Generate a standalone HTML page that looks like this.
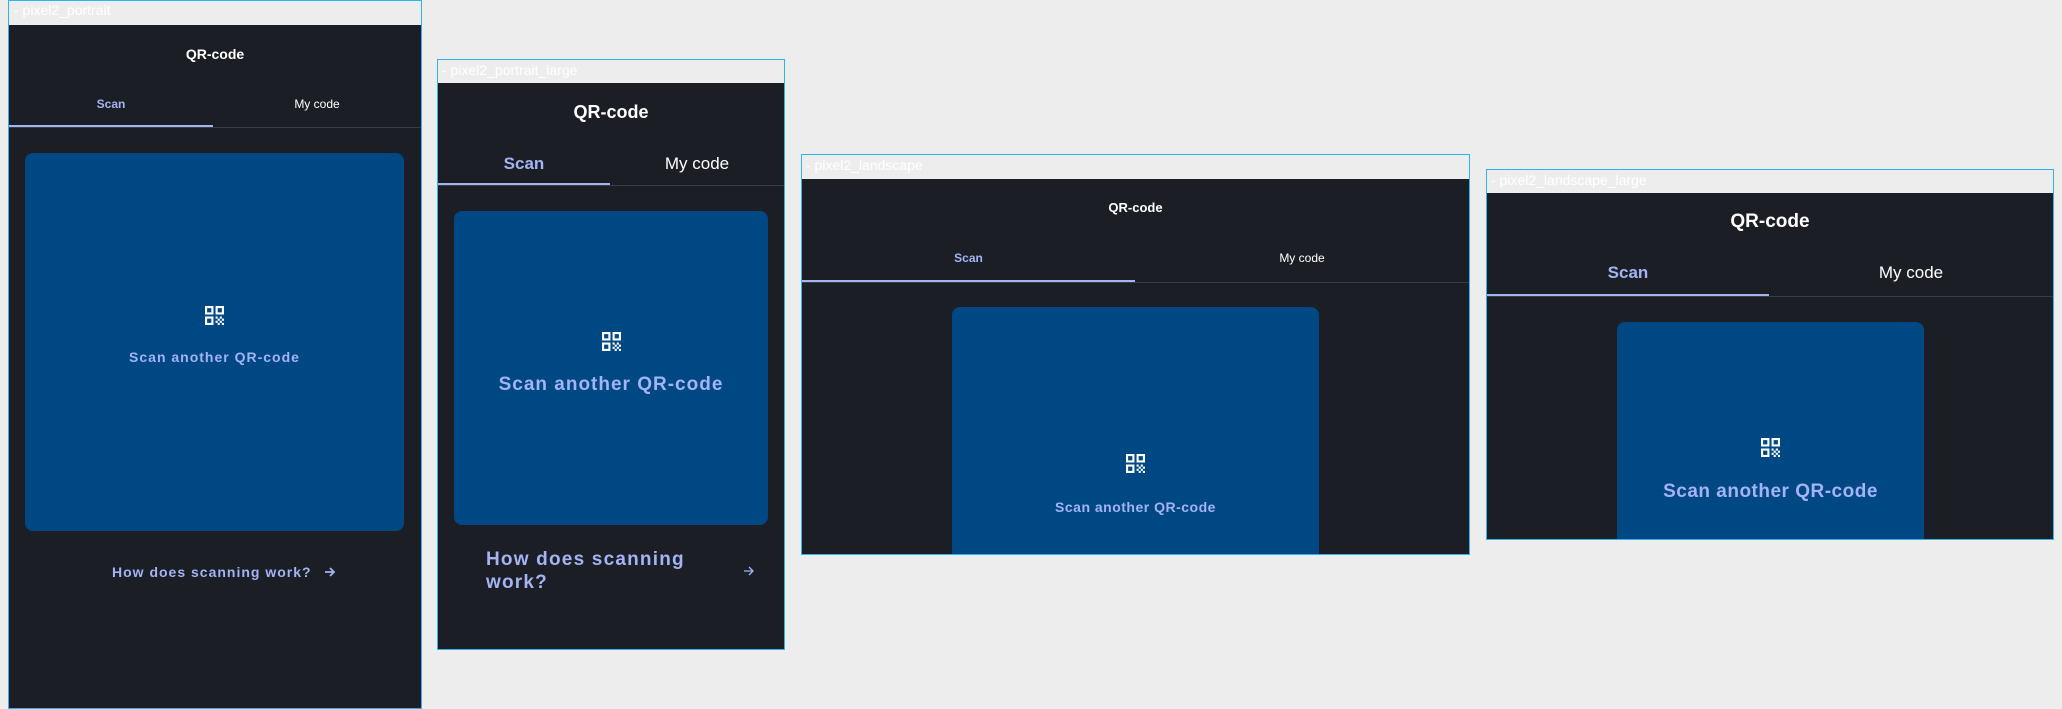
<!DOCTYPE html>
<html><head><meta charset="utf-8"><style>
*{margin:0;padding:0;box-sizing:border-box}
body{width:2062px;height:709px;background:#ededed;position:relative;overflow:hidden;font-family:"Liberation Sans","DejaVu Sans",sans-serif}
.a{position:absolute}
.fr{position:absolute;border:1px solid #2fb3ee}
.dk{position:absolute;background:#1c1e25}
.lbl{position:absolute;color:#fff;font-size:15px;white-space:nowrap}
.t{position:absolute;text-align:center;white-space:nowrap;font-weight:bold;color:#fff}
.acc{color:#a3b3f4}
.card{position:absolute;background:#004884;border-radius:8px}
.line{position:absolute;height:1px;background:#3a3c44}
.ind{position:absolute;height:3px;background:#a3b3f4}
svg{position:absolute}
</style></head><body>

<!-- Frame 1 -->
<div class="fr" style="left:8px;top:0;width:414px;height:709px"></div>
<div class="lbl" style="left:14px;top:2px;font-size:14px">- pixel2_portrait</div>
<div class="dk" style="left:9px;top:25px;width:412px;height:683px"></div>
<div class="t" style="left:9px;width:412px;top:45px;font-size:14px;line-height:18px">QR-code</div>
<div class="t acc" style="left:9px;width:204px;top:96px;font-size:12px;line-height:16px">Scan</div>
<div class="t" style="left:213px;width:208px;top:96px;font-size:12px;line-height:16px;font-weight:normal">My code</div>
<div class="line" style="left:9px;top:127px;width:412px"></div>
<div class="ind" style="left:9px;top:125px;width:204px;height:2px"></div>
<div class="card" style="left:25px;top:153px;width:379px;height:378px"></div>
<svg style="left:205px;top:306px" width="19" height="19" viewBox="3 3 18 18"><path fill="#fff" d="M3 11h8V3H3v8zm2-6h4v4H5V5zM3 21h8v-8H3v8zm2-6h4v4H5v-4zM13 3v8h8V3h-8zm6 6h-4V5h4v4zM19 19h2v2h-2zM13 13h2v2h-2zM15 15h2v2h-2zM13 17h2v2h-2zM15 19h2v2h-2zM17 17h2v2h-2zM17 13h2v2h-2zM19 15h2v2h-2z"/></svg>
<div class="t acc" style="left:25px;width:379px;top:348px;font-size:14px;line-height:18px;letter-spacing:1px">Scan another QR-code</div>
<div class="t acc" style="left:112px;top:563px;font-size:14px;line-height:18px;letter-spacing:1px;text-align:left">How does scanning work?</div>
<svg style="left:324px;top:566px" width="12" height="12" viewBox="0 0 12 12"><path d="M1 6h9M6 2l4 4-4 4" stroke="#a3b3f4" stroke-width="1.8" fill="none"/></svg>

<!-- Frame 2 -->
<div class="fr" style="left:437px;top:59px;width:348px;height:591px"></div>
<div class="lbl" style="left:442px;top:62px;font-size:14px">- pixel2_portrait_large</div>
<div class="dk" style="left:438px;top:83px;width:346px;height:566px"></div>
<div class="t" style="left:438px;width:346px;top:101px;font-size:18px;line-height:22px">QR-code</div>
<div class="t acc" style="left:438px;width:172px;top:153px;font-size:17px;line-height:22px">Scan</div>
<div class="t" style="left:610px;width:174px;top:153px;font-size:17px;line-height:22px;font-weight:normal">My code</div>
<div class="line" style="left:438px;top:185px;width:346px"></div>
<div class="ind" style="left:438px;top:183px;width:172px;height:2px"></div>
<div class="card" style="left:454px;top:211px;width:314px;height:314px"></div>
<svg style="left:602px;top:332px" width="19" height="19" viewBox="3 3 18 18"><path fill="#fff" d="M3 11h8V3H3v8zm2-6h4v4H5V5zM3 21h8v-8H3v8zm2-6h4v4H5v-4zM13 3v8h8V3h-8zm6 6h-4V5h4v4zM19 19h2v2h-2zM13 13h2v2h-2zM15 15h2v2h-2zM13 17h2v2h-2zM15 19h2v2h-2zM17 17h2v2h-2zM17 13h2v2h-2zM19 15h2v2h-2z"/></svg>
<div class="t acc" style="left:454px;width:314px;top:373px;font-size:19px;line-height:24px;letter-spacing:1px">Scan another QR-code</div>
<div class="t acc" style="left:486px;top:548px;font-size:19px;line-height:23px;letter-spacing:1.2px;text-align:left">How does scanning<br>work?</div>
<svg style="left:743px;top:565px" width="12" height="12" viewBox="0 0 12 12"><path d="M1 6h9M6 2l4 4-4 4" stroke="#a3b3f4" stroke-width="1.3" fill="none"/></svg>

<!-- Frame 3 -->
<div class="fr" style="left:801px;top:154px;width:669px;height:401px"></div>
<div class="lbl" style="left:806px;top:157px;font-size:14px">- pixel2_landscape</div>
<div class="dk" style="left:802px;top:179px;width:667px;height:375px"></div>
<div class="t" style="left:802px;width:667px;top:199px;font-size:13px;line-height:18px">QR-code</div>
<div class="t acc" style="left:802px;width:333px;top:250px;font-size:12px;line-height:16px">Scan</div>
<div class="t" style="left:1135px;width:334px;top:250px;font-size:12px;line-height:16px;font-weight:normal">My code</div>
<div class="line" style="left:802px;top:282px;width:667px"></div>
<div class="ind" style="left:802px;top:280px;width:333px;height:2px"></div>
<div class="card" style="left:952px;top:307px;width:367px;height:247px;border-radius:8px 8px 0 0"></div>
<svg style="left:1126px;top:454px" width="19" height="19" viewBox="3 3 18 18"><path fill="#fff" d="M3 11h8V3H3v8zm2-6h4v4H5V5zM3 21h8v-8H3v8zm2-6h4v4H5v-4zM13 3v8h8V3h-8zm6 6h-4V5h4v4zM19 19h2v2h-2zM13 13h2v2h-2zM15 15h2v2h-2zM13 17h2v2h-2zM15 19h2v2h-2zM17 17h2v2h-2zM17 13h2v2h-2zM19 15h2v2h-2z"/></svg>
<div class="t acc" style="left:952px;width:367px;top:498px;font-size:14px;line-height:18px;letter-spacing:0.5px">Scan another QR-code</div>

<!-- Frame 4 -->
<div class="fr" style="left:1486px;top:169px;width:568px;height:371px"></div>
<div class="lbl" style="left:1491px;top:172px;font-size:14px">- pixel2_landscape_large</div>
<div class="dk" style="left:1487px;top:193px;width:566px;height:346px"></div>
<div class="t" style="left:1487px;width:566px;top:210px;font-size:19px;line-height:24px">QR-code</div>
<div class="t acc" style="left:1487px;width:282px;top:262px;font-size:17px;line-height:22px">Scan</div>
<div class="t" style="left:1769px;width:284px;top:262px;font-size:17px;line-height:22px;font-weight:normal">My code</div>
<div class="line" style="left:1487px;top:296px;width:566px"></div>
<div class="ind" style="left:1487px;top:294px;width:282px;height:2px"></div>
<div class="card" style="left:1617px;top:322px;width:307px;height:217px;border-radius:8px 8px 0 0"></div>
<svg style="left:1761px;top:438px" width="19" height="19" viewBox="3 3 18 18"><path fill="#fff" d="M3 11h8V3H3v8zm2-6h4v4H5V5zM3 21h8v-8H3v8zm2-6h4v4H5v-4zM13 3v8h8V3h-8zm6 6h-4V5h4v4zM19 19h2v2h-2zM13 13h2v2h-2zM15 15h2v2h-2zM13 17h2v2h-2zM15 19h2v2h-2zM17 17h2v2h-2zM17 13h2v2h-2zM19 15h2v2h-2z"/></svg>
<div class="t acc" style="left:1617px;width:307px;top:480px;font-size:19px;line-height:24px;letter-spacing:0.5px">Scan another QR-code</div>

</body></html>
